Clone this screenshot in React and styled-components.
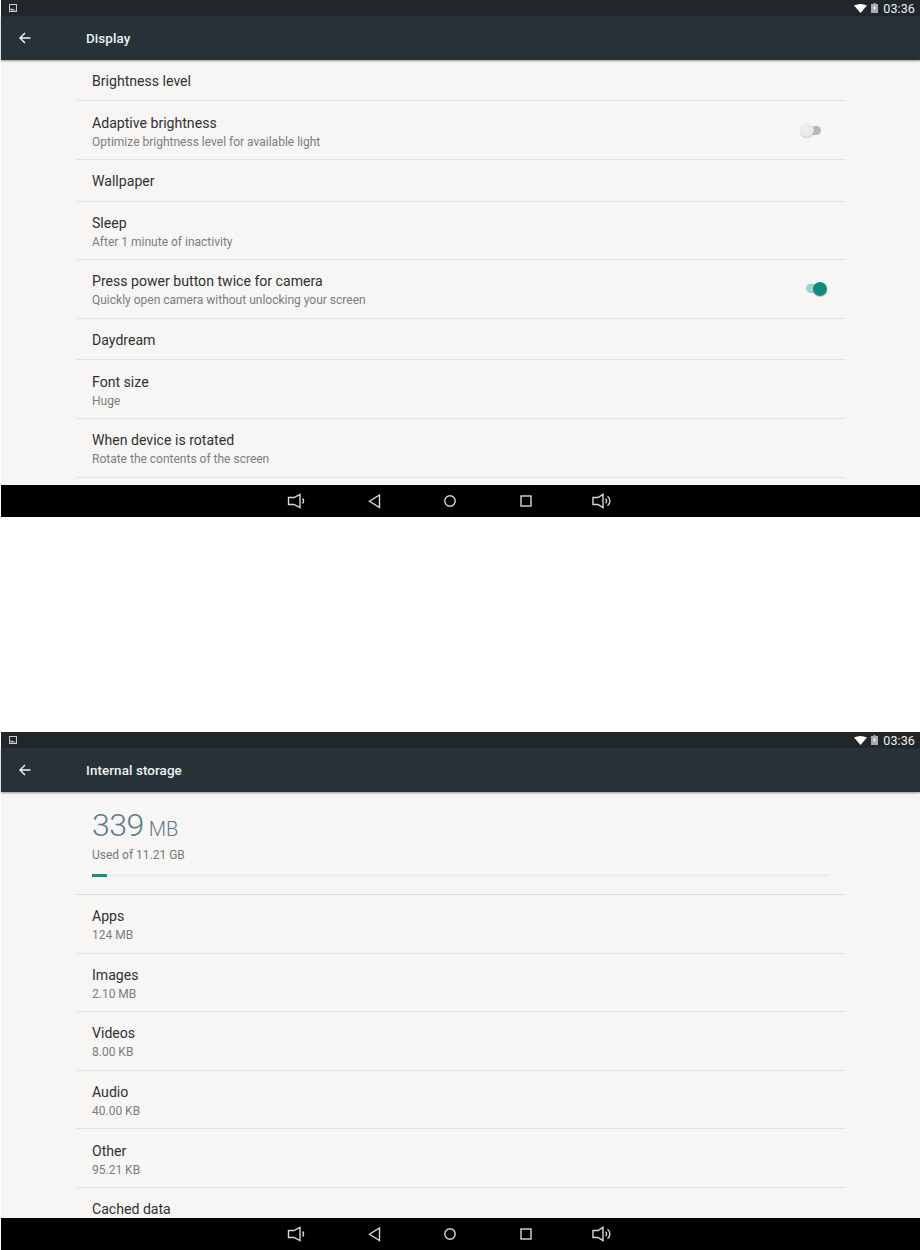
import React from 'react';
import styled, { createGlobalStyle } from 'styled-components';

const GlobalStyle = createGlobalStyle`
  html, body {
    margin: 0;
    padding: 0;
    background: #fff;
    font-family: Roboto, "Liberation Sans", sans-serif;
  }
`;

const Page = styled.div`
  width: 920px;
  height: 1250px;
  display: flex;
  flex-direction: column;
  gap: 215px;
  overflow: hidden;
`;

const Screen = styled.section`
  height: ${(p) => p.$height}px;
  margin-left: 1px;
  display: flex;
  flex-direction: column;
  background: #f7f6f4;
`;

const StatusBar = styled.div`
  height: 16.3px;
  flex: none;
  background: #212729;
  display: flex;
  align-items: center;
  padding: 0 5px 0 8px;
  color: #eceff0;
`;

const StatusRight = styled.div`
  margin-left: auto;
  display: flex;
  align-items: center;
  gap: 4px;
`;

const Clock = styled.span`
  font-size: 12.5px;
  line-height: 16px;
  letter-spacing: 0.1px;
  padding-top: 2px;
  margin-left: 1px;
`;

const Toolbar = styled.header`
  height: 43.5px;
  flex: none;
  background: #273238;
  display: flex;
  align-items: center;
  color: #eef0f1;
  box-shadow: 0 1px 2px rgba(0, 0, 0, 0.4);
  position: relative;
`;

const BackButton = styled.div`
  width: 85px;
  flex: none;
  display: flex;
  padding-left: 18px;
  box-sizing: border-box;
`;

const Title = styled.h1`
  margin: 0;
  font-size: 13.4px;
  font-weight: 500;
  letter-spacing: 0.1px;
`;

const Content = styled.main`
  flex: 1;
  min-height: 0;
  overflow: hidden;
  padding: 0 75px;
`;

const Row = styled.div`
  height: ${(p) => (p.$tall ? 58.6 : 41.6)}px;
  box-sizing: border-box;
  border-bottom: 1px solid #e4e3e1;
  padding: 3px 16px 0;
  display: flex;
  align-items: center;
  justify-content: space-between;
`;

const RowText = styled.div`
  display: flex;
  flex-direction: column;
  gap: 3px;
`;

const RowTitle = styled.div`
  font-size: 14.1px;
  line-height: 17px;
  color: #2f3133;
`;

const RowSub = styled.div`
  font-size: 12px;
  line-height: 14px;
  color: #7b7d7e;
`;

const Switch = styled.div`
  position: relative;
  width: 20px;
  height: 9px;
  border-radius: 5px;
  margin-right: ${(p) => (p.$on ? 3 : 8)}px;
  margin-bottom: 3px;
  background: ${(p) => (p.$on ? '#9fd2cb' : '#b8b8b7')};
`;

const Knob = styled.span`
  position: absolute;
  top: -2.5px;
  left: ${(p) => (p.$on ? 7 : -1)}px;
  width: 14px;
  height: 14px;
  border-radius: 50%;
  background: ${(p) => (p.$on ? '#128a7c' : '#ebebea')};
  box-shadow: 0 1px 1px rgba(0, 0, 0, 0.2);
`;

const Summary = styled.div`
  height: 103.2px;
  box-sizing: border-box;
  border-bottom: 1px solid #dcdbd9;
  padding: 14px 16px 0;
`;

const Used = styled.div`
  display: flex;
  align-items: baseline;
  gap: 5px;
  color: #5d7b8c;
  line-height: 38px;
`;

const UsedNumber = styled.span`
  font-size: 32px;
  font-weight: 300;
  letter-spacing: -0.5px;
`;

const UsedUnit = styled.span`
  font-size: 20px;
  font-weight: 300;
`;

const UsedOf = styled.div`
  font-size: 12px;
  line-height: 14px;
  color: #77797a;
`;

const Track = styled.div`
  height: 3px;
  margin: 12px 0 0;
  width: 738px;
  background: #efeeec;
`;

const Fill = styled.div`
  height: 100%;
  background: #129382;
`;

const NavBar = styled.nav`
  height: 32px;
  flex: none;
  background: #000;
  display: flex;
  align-items: center;
  justify-content: center;
  gap: 44px;
  padding-right: 21px;
`;

const NavIcon = styled.svg`
  width: 32px;
  height: 20px;
  fill: none;
  stroke: #d8d8d8;
  stroke-width: 1.4;
  display: block;
`;

const SpeakerDown = () => (
  <NavIcon viewBox="0 0 32 20">
    <path d="M6.500 6.500h5.500l6-3.200v13.400l-6-3.200H6.500z" />
    <path d="M20.500 7.500a3.500 3.500 0 0 1 0 5" />
  </NavIcon>
);

const SpeakerUp = () => (
  <NavIcon viewBox="0 0 32 20">
    <path d="M7 6.500h5l5-3.200v13.400l-5-3.200H7z" />
    <path d="M19.500 7.700a3 3 0 0 1 0 4.600" />
    <path d="M21.500 5.200a6 6 0 0 1 0 9.600" />
  </NavIcon>
);

const BackIcon = () => (
  <NavIcon viewBox="0 0 32 20">
    <path d="M21.500 4v12.500l-10-6.250z" />
  </NavIcon>
);

const HomeIcon = () => (
  <NavIcon viewBox="0 0 32 20">
    <circle cx="16" cy="10" r="5.200" />
  </NavIcon>
);

const RecentsIcon = () => (
  <NavIcon viewBox="0 0 32 20">
    <rect x="11" y="5" width="10" height="10" />
  </NavIcon>
);

function Status() {
  return (
    <StatusBar>
      <svg width="8" height="8" viewBox="0 0 8 8">
        <rect x="0.5" y="0.5" width="7" height="7" fill="none" stroke="#c9cccd" />
        <path d="M1.500 6.500V4l1 1 1-.5 1 1 2 .2v.8z" fill="#c9cccd" />
      </svg>
      <StatusRight>
        <svg width="13" height="9" viewBox="0 0 13 9">
          <path d="M0 1.500Q6.500-1.500 13 1.500L6.500 9z" fill="#fff" />
        </svg>
        <svg width="7" height="10" viewBox="0 0 7 10">
          <path d="M2.500 0h2v1h2.500v9H0V1h2.500z" fill="#a9acad" />
          <path d="M3.800 2 2.200 5.500h1.200L3.100 8l1.700-3.500H3.600z" fill="#fff" />
        </svg>
        <Clock>03:36</Clock>
      </StatusRight>
    </StatusBar>
  );
}

function Header({ title }) {
  return (
    <Toolbar>
      <BackButton>
        <svg width="12" height="12" viewBox="0 0 12 12" fill="none" stroke="#f4f5f5" strokeWidth="1.400">
          <path d="M11.500 6H1.200M6 1 1 6l5 5" />
        </svg>
      </BackButton>
      <Title>{title}</Title>
    </Toolbar>
  );
}

function Nav() {
  return (
    <NavBar>
      <SpeakerDown />
      <BackIcon />
      <HomeIcon />
      <RecentsIcon />
      <SpeakerUp />
    </NavBar>
  );
}

function SettingRow({ title, sub, toggle }) {
  return (
    <Row $tall={Boolean(sub)}>
      <RowText>
        <RowTitle>{title}</RowTitle>
        {sub && <RowSub>{sub}</RowSub>}
      </RowText>
      {toggle && (
        <Switch $on={toggle === 'on'}>
          <Knob $on={toggle === 'on'} />
        </Switch>
      )}
    </Row>
  );
}

const displayRows = [
  { title: 'Brightness level' },
  { title: 'Adaptive brightness', sub: 'Optimize brightness level for available light', toggle: 'off' },
  { title: 'Wallpaper' },
  { title: 'Sleep', sub: 'After 1 minute of inactivity' },
  { title: 'Press power button twice for camera', sub: 'Quickly open camera without unlocking your screen', toggle: 'on' },
  { title: 'Daydream' },
  { title: 'Font size', sub: 'Huge' },
  { title: 'When device is rotated', sub: 'Rotate the contents of the screen' },
];

// the last row runs under the nav bar, its second line is never visible
const storageRows = [
  { title: 'Apps', sub: '124 MB' },
  { title: 'Images', sub: '2.10 MB' },
  { title: 'Videos', sub: '8.00 KB' },
  { title: 'Audio', sub: '40.00 KB' },
  { title: 'Other', sub: '95.21 KB' },
  { title: 'Cached data', sub: '\u00a0' },
];

function App() {
  return (
    <Page>
      <GlobalStyle />
      <Screen $height={517}>
        <Status />
        <Header title="Display" />
        <Content>
          {displayRows.map((row) => (
            <SettingRow key={row.title} {...row} />
          ))}
        </Content>
        <Nav />
      </Screen>
      <Screen $height={518}>
        <Status />
        <Header title="Internal storage" />
        <Content>
          <Summary>
            <Used>
              <UsedNumber>339</UsedNumber>
              <UsedUnit>MB</UsedUnit>
            </Used>
            <UsedOf>Used of 11.21 GB</UsedOf>
            <Track>
              <Fill style={{ width: '15px' }} />
            </Track>
          </Summary>
          {storageRows.map((row) => (
            <SettingRow key={row.title} {...row} />
          ))}
        </Content>
        <Nav />
      </Screen>
    </Page>
  );
}

export default App;
